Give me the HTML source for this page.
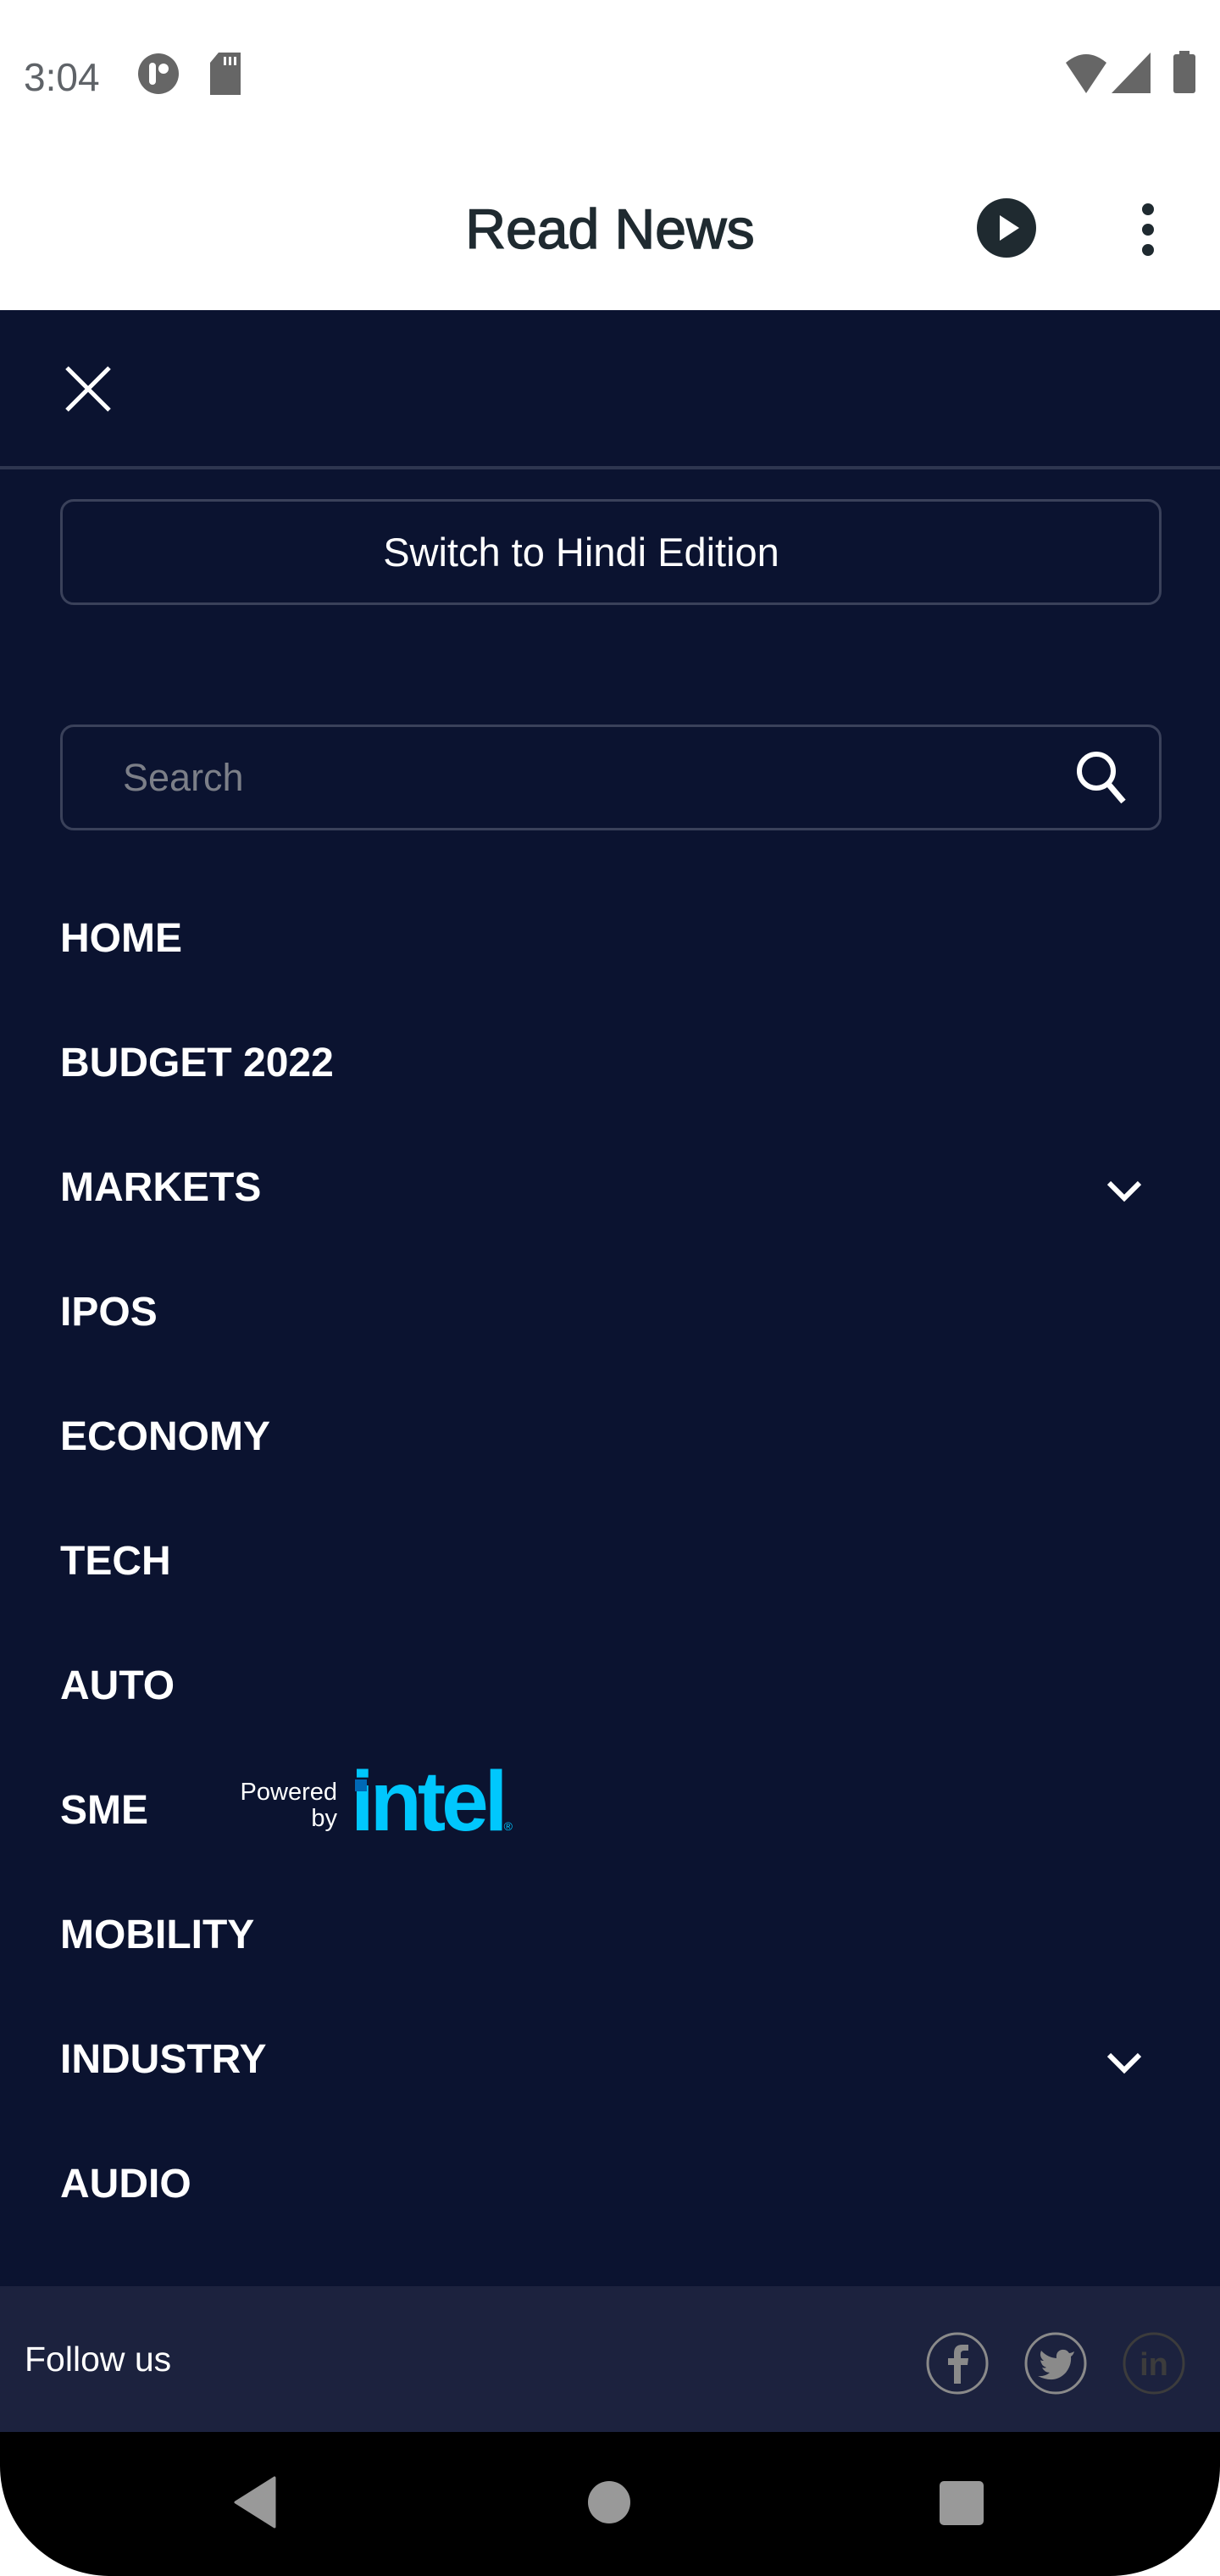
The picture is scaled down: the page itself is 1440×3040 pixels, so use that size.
<!DOCTYPE html>
<html><head><meta charset="utf-8"><style>
*{margin:0;padding:0;box-sizing:border-box}
body{width:1440px;height:3040px;background:#fff;font-family:"Liberation Sans",sans-serif;position:relative;overflow:hidden}
.abs{position:absolute}
.menu{position:absolute;left:71px;color:#fff;font-weight:bold;font-size:48px;line-height:1;}
</style></head><body>
<div class="abs" style="left:0;top:0;width:1440px;height:366px;background:#fff"></div>
<div class="abs" style="left:28px;top:64px;font-size:46px;color:#5f6368">3:04</div>
<svg class="abs" style="left:162px;top:62px" width="50" height="50" viewBox="0 0 50 50"><circle cx="25" cy="25" r="24" fill="#666"/><rect x="14" y="12" width="8" height="26" rx="4" fill="#fff"/><circle cx="31" cy="19" r="6" fill="#fff"/></svg>
<svg class="abs" style="left:246px;top:62px" width="40" height="50" viewBox="0 0 40 50"><path d="M12 0H38V50H2V12Z" fill="#666"/><rect x="18" y="5" width="3" height="10" fill="#fff"/><rect x="24" y="5" width="3" height="10" fill="#fff"/><rect x="30" y="5" width="3" height="10" fill="#fff"/></svg>
<svg class="abs" style="left:1256px;top:60px" width="160" height="52" viewBox="0 0 160 52"><path d="M2 14Q26 -6 50 14L26 50Z" fill="#666"/><path d="M102 2V50H56Z" fill="#666"/><rect x="129" y="4" width="26" height="46" rx="3" fill="#666"/><rect x="136" y="0" width="12" height="6" fill="#666"/></svg>
<div class="abs" style="left:0;width:1440px;top:232px;text-align:center;font-size:66px;color:#1f2a30;-webkit-text-stroke:1.5px #1f2a30;">Read News</div>
<svg class="abs" style="left:1153px;top:234px" width="70" height="70" viewBox="0 0 70 70"><circle cx="35" cy="35" r="35" fill="#1f2a30"/><path d="M27 20L50 35L27 50Z" fill="#fff"/></svg>
<svg class="abs" style="left:1342px;top:238px" width="26" height="66" viewBox="0 0 26 66"><circle cx="13" cy="9" r="7" fill="#1f2a30"/><circle cx="13" cy="33" r="7" fill="#1f2a30"/><circle cx="13" cy="57" r="7" fill="#1f2a30"/></svg>

<div class="abs" style="left:0;top:366px;width:1440px;height:2332px;background:#0b1330"></div>
<svg class="abs" style="left:76px;top:431px" width="56" height="56" viewBox="0 0 56 56"><path d="M3 3L53 53M53 3L3 53" stroke="#fff" stroke-width="5"/></svg>
<div class="abs" style="left:0;top:550px;width:1440px;height:4px;background:#2e3650"></div>
<div class="abs" style="left:71px;top:589px;width:1300px;height:125px;border:3px solid #3a415a;border-radius:16px"></div>
<div class="abs" style="left:0;width:1372px;top:624px;text-align:center;font-size:47px;color:#fff">Switch to Hindi Edition</div>
<div class="abs" style="left:71px;top:855px;width:1300px;height:125px;border:3px solid #3a415a;border-radius:16px"></div>
<div class="abs" style="left:145px;top:892px;font-size:45px;color:#7c7f88">Search</div>
<svg class="abs" style="left:1268px;top:884px" width="62" height="66" viewBox="0 0 62 66"><circle cx="26" cy="26" r="20" fill="none" stroke="#fff" stroke-width="6"/><path d="M40 41L58 62" stroke="#fff" stroke-width="7"/></svg>

<div class="menu" style="top:1084px">HOME</div>
<div class="menu" style="top:1231px">BUDGET 2022</div>
<div class="menu" style="top:1378px">MARKETS</div>
<div class="menu" style="top:1525px">IPOS</div>
<div class="menu" style="top:1672px">ECONOMY</div>
<div class="menu" style="top:1819px">TECH</div>
<div class="menu" style="top:1966px">AUTO</div>
<div class="menu" style="top:2113px">SME</div>
<div class="menu" style="top:2260px">MOBILITY</div>
<div class="menu" style="top:2407px">INDUSTRY</div>
<div class="menu" style="top:2554px">AUDIO</div>
<svg class="abs" style="left:1305px;top:1392px" width="44" height="28" viewBox="0 0 44 28"><path d="M4 4L22 22L40 4" fill="none" stroke="#fff" stroke-width="6"/></svg>
<svg class="abs" style="left:1305px;top:2421px" width="44" height="28" viewBox="0 0 44 28"><path d="M4 4L22 22L40 4" fill="none" stroke="#fff" stroke-width="6"/></svg>
<div class="abs" style="left:276px;top:2100px;font-size:29px;color:#fff;line-height:31px;text-align:right;width:122px">Powered<br>by</div>
<div class="abs" style="left:414px;top:2076px;font-size:100px;color:#00c7fd;line-height:1;letter-spacing:-5px;font-weight:bold">intel<span style="font-size:14px;letter-spacing:0;font-weight:normal">®</span></div>
<div class="abs" style="left:419px;top:2100px;width:14px;height:14px;background:#0068b5"></div>

<div class="abs" style="left:0;top:2698px;width:1440px;height:172px;background:#1c223e"></div>
<div class="abs" style="left:29px;top:2761px;font-size:41px;color:#fff">Follow us</div>
<svg class="abs" style="left:1092px;top:2751px" width="310" height="76" viewBox="0 0 310 76"><circle cx="38" cy="38" r="35" fill="none" stroke="#8a8a8a" stroke-width="3"/><path d="M42 62V40H50L51 32H42V27Q42 23 46 23H51V16H44Q34 16 34 26V32H27V40H34V62Z" fill="#8a8a8a"/><circle cx="154" cy="38" r="35" fill="none" stroke="#8a8a8a" stroke-width="3"/><path d="M176 24Q172 26 170 26Q167 21 161 22Q154 24 155 32Q144 31 137 23Q134 30 140 35Q137 35 136 34Q137 41 143 43Q141 44 138 43Q141 49 147 49Q141 54 133 53Q153 63 166 49Q173 40 172 30Q175 28 176 24Z" fill="#8a8a8a"/><circle cx="270" cy="38" r="35" fill="none" stroke="#3c3c3c" stroke-width="3"/><text x="270" y="52" text-anchor="middle" font-family="Liberation Sans" font-weight="bold" font-size="38" fill="#3c3c3c">in</text></svg>

<div class="abs" style="left:0;top:2870px;width:1440px;height:170px;background:#000;border-radius:0 0 130px 130px"></div>
<svg class="abs" style="left:274px;top:2922px" width="52" height="62" viewBox="0 0 52 62"><path d="M50 2V60L4 31Z" fill="#999" stroke="#999" stroke-width="3" stroke-linejoin="round"/></svg>
<div class="abs" style="left:694px;top:2928px;width:50px;height:50px;border-radius:50%;background:#999"></div>
<div class="abs" style="left:1109px;top:2928px;width:52px;height:52px;border-radius:5px;background:#999"></div>
</body></html>
